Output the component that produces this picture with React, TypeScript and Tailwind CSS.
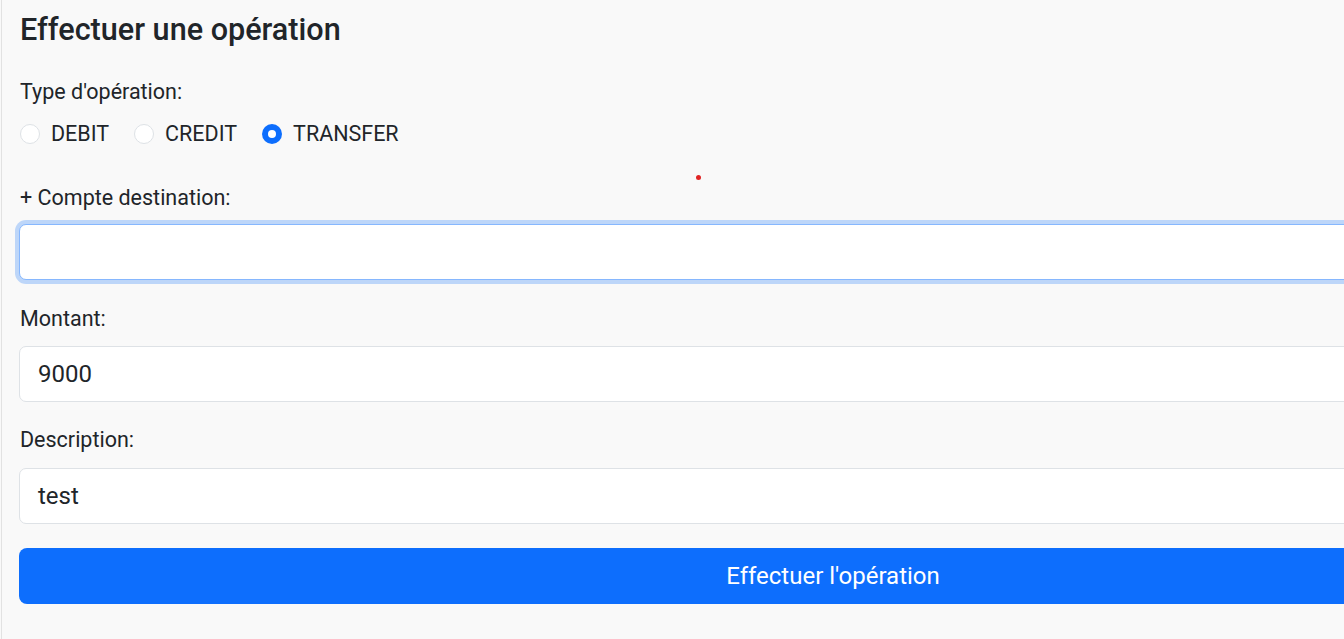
import React from "react";

function Radio({ label, checked }: { label: string; checked?: boolean }) {
  return (
    <label className="flex items-center mr-[25px]">
      {checked ? (
        <span className="w-[20px] h-[20px] rounded-full bg-[#0d6efd] flex items-center justify-center shrink-0">
          <span className="w-[8px] h-[8px] rounded-full bg-white" />
        </span>
      ) : (
        <span className="w-[20px] h-[20px] rounded-full bg-white border border-[#dee2e6] shrink-0" />
      )}
      <span className="ml-[11px] text-[21.5px] leading-[28px] text-[#212529]">{label}</span>
    </label>
  );
}

export default function App() {
  return (
    <div
      className="min-h-screen w-full overflow-hidden bg-[#f9f9f9] pl-px"
      style={{ fontFamily: "Roboto, 'Noto Sans', sans-serif" }}
    >
      <div className="relative min-h-[639px] border-l border-[#e2e2e2] pl-[17px] pt-[12px] pb-[35px]">
        <div className="absolute left-[694px] top-[175px] w-[5px] h-[5px] rounded-full bg-[#e02424]" />
        <div className="w-[1628px] flex flex-col">
          <h4 className="text-[30.6px] leading-[36px] font-medium text-[#212529] pl-px">
            Effectuer une opération
          </h4>
          <div className="mt-[30px] text-[21.5px] leading-[28px] text-[#212529] pl-px">Type d'opération:</div>
          <div className="mt-[14px] flex items-center pl-px">
            <Radio label="DEBIT" />
            <Radio label="CREDIT" />
            <Radio label="TRANSFER" checked />
          </div>
          <div className="mt-[36px] text-[21.5px] leading-[28px] text-[#212529] pl-px">+ Compte destination:</div>
          <div className="mt-[12px] h-[56px] rounded-[7px] bg-white border border-[#86b7fe] shadow-[0_0_0_4px_rgba(13,110,253,0.25)]" />
          <div className="mt-[25px] text-[21.5px] leading-[28px] text-[#212529] pl-px">Montant:</div>
          <div className="mt-[13px] h-[56px] rounded-[7px] bg-white border border-[#dee2e6] flex items-center pl-[18px] text-[24px] text-[#212529]">
            9000
          </div>
          <div className="mt-[24px] text-[21.5px] leading-[28px] text-[#212529] pl-px">Description:</div>
          <div className="mt-[14px] h-[56px] rounded-[7px] bg-white border border-[#dee2e6] flex items-center pl-[18px] text-[24px] text-[#212529]">
            test
          </div>
          <button className="mt-[24px] h-[56px] rounded-[8px] bg-[#0d6efd] text-white text-[24px] flex items-center justify-center">
            Effectuer l'opération
          </button>
        </div>
      </div>
    </div>
  );
}
